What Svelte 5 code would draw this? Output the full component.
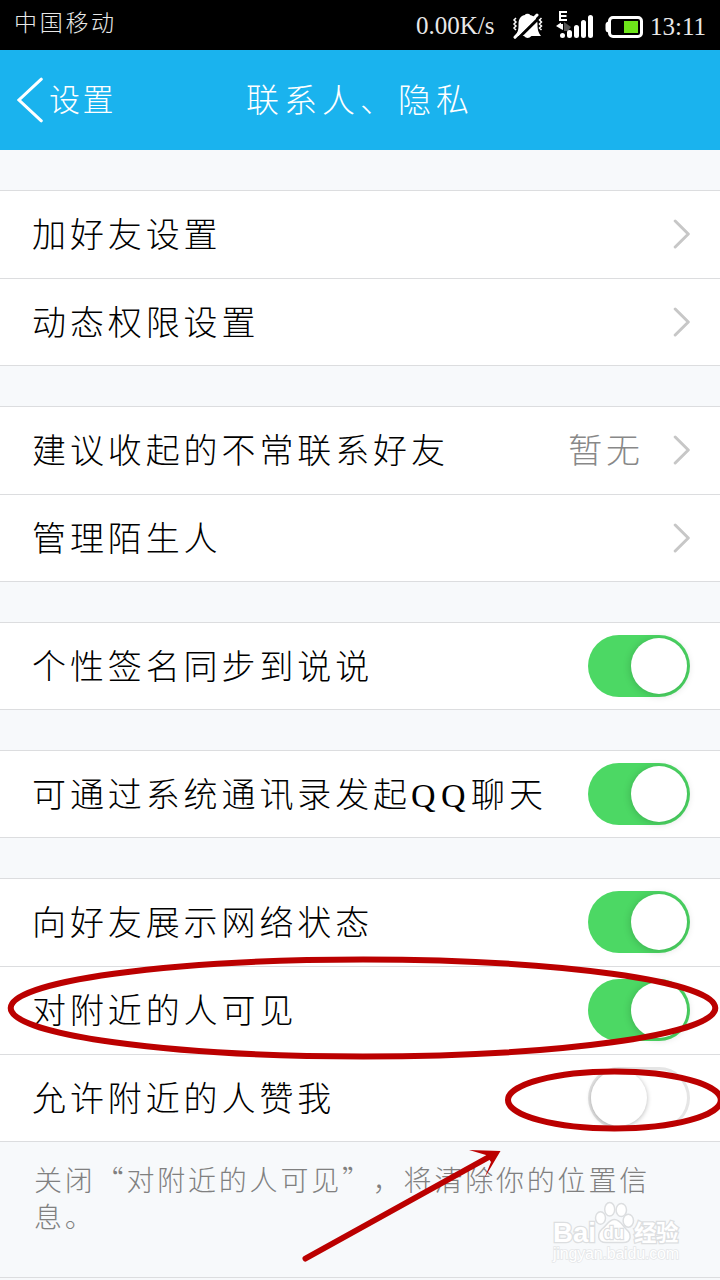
<script>
  const groups = [
    [
      { label: '加好友设置', type: 'link' },
      { label: '动态权限设置', type: 'link' },
    ],
    [
      { label: '建议收起的不常联系好友', type: 'link', value: '暂无' },
      { label: '管理陌生人', type: 'link' },
    ],
    [{ label: '个性签名同步到说说', type: 'switch', on: true }],
    [{ label: '可通过系统通讯录发起QQ聊天', type: 'switch', on: true }],
    [
      { label: '向好友展示网络状态', type: 'switch', on: true },
      { label: '对附近的人可见', type: 'switch', on: true },
      { label: '允许附近的人赞我', type: 'switch', on: false },
    ],
  ];

  let settings = $state(groups);

  // latin letters get wider tracking than the hanzi
  const split = (label) => label.split(/([A-Za-z]+)/).filter(Boolean);
</script>

<div class="screen">
  <div class="status">
    <span class="carrier">中国移动</span>
    <span class="speed">0.00K/s</span>
    <svg class="bell" width="32" height="26" viewBox="512 13 32 26">
      <path d="M514.5 36 C518.5 32 518.5 29 518.5 24 C518.5 18 521.5 15.500 525 15 Q525 13.700 527.500 13.700 Q530 13.700 530 15 C535 16 537.500 19 537.500 24 C537.500 29 538 32 541 36 Z" fill="#fff" />
      <path d="M524 36 Q527.500 40 531.500 36Z" fill="#fff" />
      <path d="M517 39.500 L541 16" stroke="#000" stroke-width="3" />
      <path d="M515 37.300 L537 15" stroke="#fff" stroke-width="3" stroke-linecap="round" />
      <path d="M515.500 18 l-2 2 2 2 -2 2 2 2 -2 2 2 2M541 18 l-2 2 2 2 -2 2 2 2 -2 2 2 2" transform="translate(.5 0)" fill="none" stroke="#fff" stroke-width="1.500" />
    </svg>
    <svg class="signal" width="38" height="30" viewBox="556 10 38 30">
      <path d="M567 12H560V20H567M560 16H566.500" fill="none" stroke="#fff" stroke-width="2" />
      <path d="M556 26 L561 22.500V24H563V30L561 29Z" fill="#fff" />
      <path d="M564 22 L571 27 L568 31 L564 31Z" fill="#555" />
      <path d="M562.500 35.500V35.600M569.500 32.500V35.500M576.500 27.500V35.500M583.500 22.500V35.500M590.500 17.500V35.500" stroke="#fff" stroke-width="5" stroke-linecap="round" />
    </svg>
    <svg class="battery" width="39" height="24" viewBox="605 15 39 24">
      <path d="M609 21.500 Q605.500 21.500 605.500 25V29Q605.500 32.500 609 32.500Z" fill="#fff" />
      <rect x="609.500" y="17.500" width="32" height="19" rx="3.500" fill="#000" stroke="#fff" stroke-width="3" />
      <rect x="624" y="21" width="14" height="12" fill="#6de51a" />
    </svg>
    <span class="time">13:11</span>
  </div>

  <header>
    <div class="back">
      <svg width="26" height="46" viewBox="0 0 26 46">
        <path d="M24.300 2.200 L2 23 L24.300 43.800" fill="none" stroke="#fff" stroke-width="3" stroke-linecap="round" />
      </svg>
      <span>设置</span>
    </div>
    <h1>联系人、隐私</h1>
  </header>

  {#each settings as group}
    <section>
      {#each group as item}
        <div class="row">
          <span class="label">
            {#each split(item.label) as part}<span class:latin={/[A-Z]/.test(part)}>{part}</span>{/each}
          </span>
          {#if item.type === 'link'}
            {#if item.value}<span class="value">{item.value}</span>{/if}
            <svg class="chevron" width="18" height="32" viewBox="0 0 18 32">
              <path d="M3.200 3 L16.300 16 L3.200 29" fill="none" stroke="#c7c7c7" stroke-width="3" stroke-linecap="round" stroke-linejoin="round" />
            </svg>
          {:else}
            <button class="switch" class:on={item.on} aria-label={item.label} onclick={() => (item.on = !item.on)}>
              <i></i>
            </button>
          {/if}
        </div>
      {/each}
    </section>
  {/each}

  <footer>关闭“对附近的人可见”，将清除你的位置信息。</footer>

  <svg class="marks" width="720" height="1280" viewBox="0 0 720 1280">
    <g class="logo">
      <text x="553" y="1242" font-size="27.500" font-weight="700" textLength="43">Bai</text>
      <ellipse cx="600.500" cy="1218" rx="5" ry="6.200" />
      <ellipse cx="609.700" cy="1209.300" rx="5" ry="6.800" />
      <ellipse cx="621.300" cy="1210" rx="5.200" ry="6.500" />
      <ellipse cx="628.300" cy="1220.700" rx="5.200" ry="6.500" />
      <path d="M614.500 1219.500 C620 1219.500 622 1225 626 1229 C632 1234 632 1242.500 623 1242.500 H606 C597 1242.500 597 1234 602 1229 C607 1225 609 1219.500 614.500 1219.500Z" />
      <text class="du" x="603.500" y="1239" font-size="18" font-weight="700" textLength="20.500" lengthAdjust="spacingAndGlyphs">du</text>
      <text class="cjk" x="634" y="1240.500" font-size="22.500" font-weight="700" textLength="44.500">经验</text>
      <text class="url" x="553" y="1259" font-size="16" textLength="126">jingyan.baidu.com</text>
    </g>
    <g fill="none" stroke="#b00" stroke-width="6">
      <ellipse cx="363" cy="1008" rx="352.300" ry="48.500" />
      <ellipse cx="614.400" cy="1100" rx="106.400" ry="28.500" />
      <path d="M305.500 1258.500 L488 1157.500" stroke-linecap="round" />
    </g>
    <path d="M500.500 1151 L469 1150 L486 1155 L491 1162 L484.500 1178Z" fill="#b00" />
  </svg>
</div>

<style>
  :global(body) {
    margin: 0;
    background: #f7f9fb;
  }
  .screen {
    position: relative;
    width: 720px;
    height: 1280px;
    overflow: hidden;
    background: #f7f9fb;
    color: #000;
    font-family: 'Liberation Serif', 'Noto Sans CJK SC', serif;
    font-weight: 300;
  }
  .status {
    display: flex;
    align-items: center;
    box-sizing: border-box;
    height: 50px;
    padding: 0 12px 0 14px;
    background: #000;
    color: #e8e8e8;
    font-size: 25px;
    line-height: 50px;
    white-space: nowrap;
  }
  .carrier {
    flex: 1;
    height: 50px;
    line-height: 48px;
    font-size: 23px;
    letter-spacing: 2.7px;
  }
  .speed {
    width: 80px;
    margin-right: 16px;
    padding-top: 2px;
  }
  .bell {
    margin-top: 2px;
  }
  .signal {
    margin-left: 12px;
  }
  .battery {
    margin: 4px 6px 0 11px;
  }
  .time {
    width: 58px;
    padding-top: 3px;
  }
  header {
    display: grid;
    grid-template-columns: 1fr auto 1fr;
    align-items: center;
    height: 100px;
    margin-bottom: 40px;
    background: #1ab3ee;
    color: #fff;
  }
  .back {
    display: flex;
    align-items: center;
    padding-left: 17px;
    font-size: 31px;
    letter-spacing: 2.5px;
  }
  .back span {
    margin-left: 6px;
    padding-bottom: 5px;
  }
  h1 {
    margin: 0;
    padding-bottom: 4px;
    font-size: 33px;
    font-weight: 300;
    letter-spacing: 5px;
  }
  section {
    margin-bottom: 40px;
    border-top: 1px solid #dcdddf;
    background: #fff;
  }
  .row {
    display: flex;
    align-items: center;
    box-sizing: border-box;
    height: 88px;
    padding: 0 30px 1px 32px;
    border-bottom: 1px solid #dcdddf;
    font-size: 34px;
    letter-spacing: 3.9px;
    white-space: nowrap;
  }
  .row:last-child {
    height: 87px;
    padding-bottom: 0;
  }
  .label {
    flex: 1;
    padding-bottom: 4px;
  }
  .latin {
    letter-spacing: 5.5px;
  }
  .value {
    margin-right: 28px;
    padding-bottom: 4px;
    color: #888;
  }
  .switch {
    flex: none;
    box-sizing: border-box;
    width: 102px;
    height: 62px;
    padding: 3px;
    border: 0;
    border-radius: 31px;
    background: #fff;
    box-shadow: inset 0 0 0 3px #e5e5e5;
  }
  .switch i {
    display: block;
    width: 56px;
    height: 56px;
    border-radius: 50%;
    background: #fff;
    box-shadow: 0 1px 5px rgba(0, 0, 0, 0.28);
  }
  .switch.on {
    background: #4cd864;
    box-shadow: none;
  }
  .switch.on i {
    margin-left: 40px;
    box-shadow: 0 1px 8px rgba(0, 0, 0, 0.2);
  }
  section:last-of-type {
    margin-bottom: 0;
  }
  footer {
    box-sizing: border-box;
    height: 136px;
    padding: 19px 45px 0 34px;
    border-bottom: 1px solid #dcdddf;
    color: #808080;
    font-family: 'Noto Sans CJK SC', sans-serif;
    font-size: 28px;
    line-height: 37px;
    letter-spacing: 2.8px;
    text-spacing-trim: space-all;
  }
  .marks {
    position: absolute;
    top: 0;
    left: 0;
    pointer-events: none;
  }
  .logo {
    fill: #fff;
    stroke: #dcdee0;
    stroke-width: 1.5px;
    font-family: 'Liberation Sans', sans-serif;
  }
  .logo text {
    paint-order: stroke;
    stroke-width: 2.5px;
  }
  .logo .cjk {
    font-family: 'Noto Sans CJK SC', sans-serif;
  }
  .logo .url {
    stroke-width: 1.5px;
    stroke: #e4e6e8;
  }
</style>
